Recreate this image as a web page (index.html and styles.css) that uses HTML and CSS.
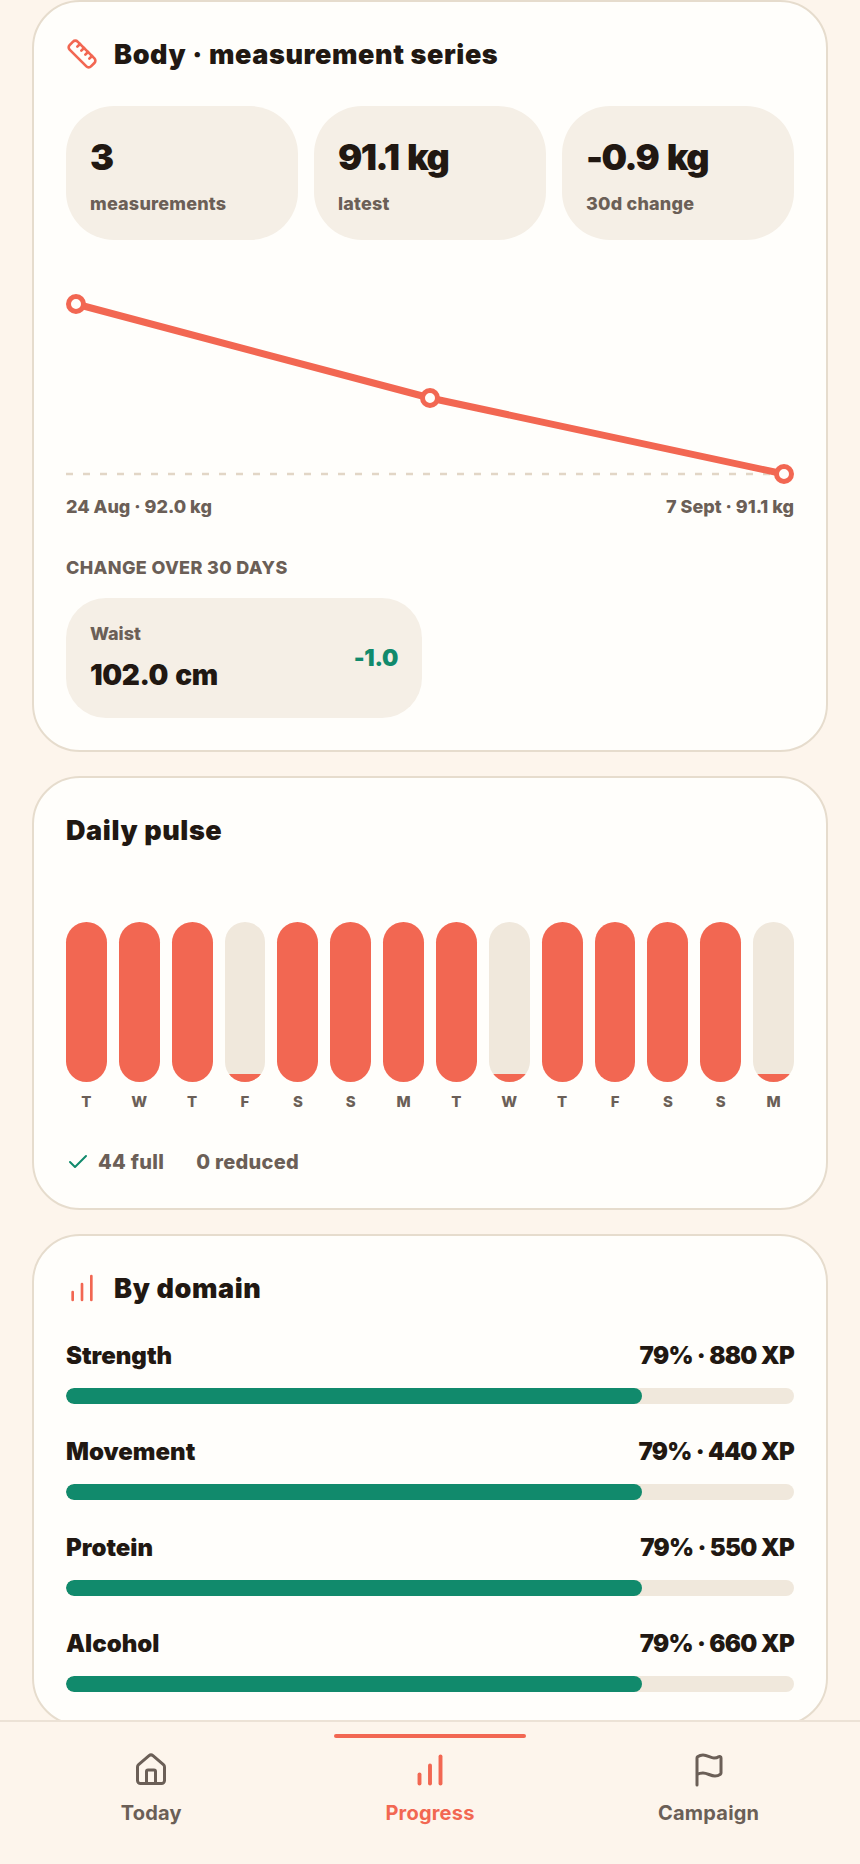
FILE: index.html
```html
<!DOCTYPE html>
<html lang="en">
<head>
<meta charset="utf-8">
<title>Progress</title>
<link rel="stylesheet" href="styles.css">
</head>
<body>
<main class="page">
  <section class="card">
    <header class="card-head">
      <svg class="head-icon" viewBox="0 0 24 24"><path d="M21.3 15.3a2.4 2.4 0 0 1 0 3.4l-2.6 2.6a2.4 2.4 0 0 1-3.4 0L2.7 8.7a2.41 2.41 0 0 1 0-3.4l2.6-2.6a2.41 2.41 0 0 1 3.4 0Z"/><path d="m14.5 12.5 2-2"/><path d="m11.5 9.5 2-2"/><path d="m8.5 6.5 2-2"/><path d="m17.5 15.5 2-2"/></svg>
      <h2 class="card-title">Body · measurement series</h2>
    </header>
    <div class="stats">
      <div class="stat"><div class="stat-value">3</div><div class="stat-label">measurements</div></div>
      <div class="stat"><div class="stat-value">91.1 kg</div><div class="stat-label">latest</div></div>
      <div class="stat"><div class="stat-value">-0.9 kg</div><div class="stat-label">30d change</div></div>
    </div>
    <svg class="chart" viewBox="0 0 728 208">
      <line class="chart-base" x1="0" y1="202" x2="728" y2="202"/>
      <polyline class="chart-line" points="10,32 364,126 718,202"/>
      <circle class="chart-dot" cx="10" cy="32" r="7.5"/>
      <circle class="chart-dot" cx="364" cy="126" r="7.5"/>
      <circle class="chart-dot" cx="718" cy="202" r="7.5"/>
    </svg>
    <div class="chart-labels"><span>24 Aug · 92.0 kg</span><span>7 Sept · 91.1 kg</span></div>
    <h3 class="section-label">CHANGE OVER 30 DAYS</h3>
    <div class="change-grid">
      <div class="change">
        <div class="change-text"><div class="change-name">Waist</div><div class="change-value">102.0 cm</div></div>
        <div class="change-delta">-1.0</div>
      </div>
    </div>
  </section>

  <section class="card">
    <header class="card-head"><h2 class="card-title">Daily pulse</h2></header>
    <div class="pulse">
      <div class="day"><div class="bar full"></div><span>T</span></div>
      <div class="day"><div class="bar full"></div><span>W</span></div>
      <div class="day"><div class="bar full"></div><span>T</span></div>
      <div class="day"><div class="bar low"><i></i></div><span>F</span></div>
      <div class="day"><div class="bar full"></div><span>S</span></div>
      <div class="day"><div class="bar full"></div><span>S</span></div>
      <div class="day"><div class="bar full"></div><span>M</span></div>
      <div class="day"><div class="bar full"></div><span>T</span></div>
      <div class="day"><div class="bar low"><i></i></div><span>W</span></div>
      <div class="day"><div class="bar full"></div><span>T</span></div>
      <div class="day"><div class="bar full"></div><span>F</span></div>
      <div class="day"><div class="bar full"></div><span>S</span></div>
      <div class="day"><div class="bar full"></div><span>S</span></div>
      <div class="day"><div class="bar low"><i></i></div><span>M</span></div>
    </div>
    <div class="legend">
      <span class="legend-item"><svg class="check" viewBox="0 0 24 24"><path d="M20 6 9 17l-5-5"/></svg>44 full</span>
      <span class="legend-item">0 reduced</span>
    </div>
  </section>

  <section class="card">
    <header class="card-head">
      <svg class="head-icon" viewBox="0 0 24 24"><path d="M5 21v-6"/><path d="M12 21V9"/><path d="M19 21V3"/></svg>
      <h2 class="card-title">By domain</h2>
    </header>
    <div class="domains">
      <div class="domain"><div class="domain-row"><span>Strength</span><span class="domain-value">79% · 880 XP</span></div><div class="track"><div class="fill" style="width:79.1%"></div></div></div>
      <div class="domain"><div class="domain-row"><span>Movement</span><span class="domain-value">79% · 440 XP</span></div><div class="track"><div class="fill" style="width:79.1%"></div></div></div>
      <div class="domain"><div class="domain-row"><span>Protein</span><span class="domain-value">79% · 550 XP</span></div><div class="track"><div class="fill" style="width:79.1%"></div></div></div>
      <div class="domain"><div class="domain-row"><span>Alcohol</span><span class="domain-value">79% · 660 XP</span></div><div class="track"><div class="fill" style="width:79.1%"></div></div></div>
    </div>
  </section>
</main>

<nav class="nav">
  <a class="nav-item">
    <svg class="nav-icon" viewBox="0 0 24 24"><path d="M15 21v-8a1 1 0 0 0-1-1h-4a1 1 0 0 0-1 1v8"/><path d="M3 10a2 2 0 0 1 .709-1.528l7-5.999a2 2 0 0 1 2.582 0l7 5.999A2 2 0 0 1 21 10v9a2 2 0 0 1-2 2H5a2 2 0 0 1-2-2z"/></svg>
    <span>Today</span>
  </a>
  <a class="nav-item active">
    <svg class="nav-icon" viewBox="0 0 24 24"><path d="M5 21v-6"/><path d="M12 21V9"/><path d="M19 21V3"/></svg>
    <span>Progress</span>
  </a>
  <a class="nav-item">
    <svg class="nav-icon" viewBox="0 0 24 24"><path d="M4 22V4a1 1 0 0 1 .4-.8A6 6 0 0 1 8 2c3 0 5 2 7.333 2q2 0 3.067-.8A1 1 0 0 1 20 4v10a1 1 0 0 1-.4.8A6 6 0 0 1 16 16c-3 0-5-2-8-2a8 8 0 0 0-4 1"/></svg>
    <span>Campaign</span>
  </a>
</nav>
</body>
</html>
```
FILE: styles.css
```css
* { box-sizing: border-box; }
html, body { margin: 0; height: 1864px; overflow: hidden; }
body {
  background: #fdf5ec;
  color: #211812;
  font-family: Inter, "Liberation Sans", sans-serif;
}
.page { display: flex; flex-direction: column; gap: 24px; padding: 0 32px; }
.card {
  background: #fffefb;
  border: 2px solid #e6dccd;
  border-radius: 48px;
  padding: 32px;
}
.card-head { display: flex; align-items: center; gap: 16px; height: 40px; }
.head-icon {
  width: 32px; height: 32px; flex: none;
  fill: none; stroke: #f26752; stroke-width: 2; stroke-linecap: round; stroke-linejoin: round;
}
.card-title { margin: 0; padding-top: 1px; font-size: 27px; line-height: 40px; font-weight: 900; letter-spacing: 0.6px; }
.stats { display: grid; grid-template-columns: repeat(3, 1fr); gap: 16px; margin-top: 32px; }
.stat { background: #f5efe6; border-radius: 48px; height: 134px; padding: 26px 24px 0; }
.stat-value { font-size: 36px; line-height: 50px; font-weight: 900; letter-spacing: -1.6px; word-spacing: 3px; }
.stat-label { font-size: 18px; line-height: 24px; font-weight: 800; letter-spacing: 0.2px; color: #6b5f57; margin-top: 10px; }
.chart { display: block; width: 728px; height: 208px; margin-top: 32px; overflow: visible; }
.chart-base { stroke: #e2d6c6; stroke-width: 2.5; stroke-dasharray: 7 10; }
.chart-line { fill: none; stroke: #f26752; stroke-width: 7; stroke-linejoin: round; }
.chart-dot { fill: #fffefb; stroke: #f26752; stroke-width: 5; }
.chart-labels {
  display: flex; justify-content: space-between;
  margin-top: 15px; font-size: 18px; line-height: 24px; font-weight: 800; color: #6b5f57;
}
.section-label { margin: 37px 0 0; font-size: 18px; line-height: 24px; font-weight: 800; letter-spacing: 0.35px; color: #6b5f57; }
.change-grid { display: grid; grid-template-columns: repeat(2, 1fr); gap: 16px; margin-top: 18px; }
.change {
  display: flex; align-items: center; justify-content: space-between;
  height: 120px; padding: 0 24px; background: #f5efe6; border-radius: 40px;
}
.change-text { padding-bottom: 2px; }
.change-name { font-size: 18px; line-height: 24px; font-weight: 800; color: #6b5f57; }
.change-value { font-size: 28px; line-height: 36px; font-weight: 900; margin-top: 11px; letter-spacing: -0.4px; word-spacing: 2px; }
.change-delta { font-size: 23px; line-height: 32px; font-weight: 900; letter-spacing: -0.3px; color: #118a6c; }
.pulse { display: flex; gap: 12px; margin-top: 72px; }
.day { flex: 1; display: flex; flex-direction: column; align-items: center; }
.day span { margin-top: 10px; font-size: 15px; line-height: 20px; font-weight: 800; color: #6b5f57; }
.bar { width: 100%; height: 160px; border-radius: 21px; overflow: hidden; display: flex; align-items: flex-end; }
.bar.full { background: #f26752; }
.bar.low { background: #f0e8dc; }
.bar.low i { display: block; width: 100%; height: 8px; background: #f26752; }
.legend { display: flex; gap: 32px; margin-top: 35px; height: 29px; align-items: center; font-size: 20px; font-weight: 800; letter-spacing: 0.3px; color: #6b5f57; }
.legend-item { display: flex; align-items: center; gap: 8px; }
.check { width: 24px; height: 24px; fill: none; stroke: #118a6c; stroke-width: 2; stroke-linecap: round; stroke-linejoin: round; }
.domains { display: flex; flex-direction: column; gap: 34px; margin-top: 34px; }
.domain-row { display: flex; justify-content: space-between; font-size: 24px; line-height: 28px; font-weight: 900; margin-bottom: 18px; }
.domain-value { letter-spacing: -0.7px; }
.track { height: 16px; background: #f0e8dc; border-radius: 8px; overflow: hidden; }
.fill { height: 100%; background: #118a6c; border-radius: 8px; }
.nav {
  position: fixed; left: 0; right: 0; bottom: 0; height: 144px;
  display: grid; grid-template-columns: repeat(3, 1fr); padding: 0 12px;
  background: #fdf5ec; border-top: 2px solid #ece2d6;
}
.nav-item {
  position: relative; display: flex; flex-direction: column; align-items: center;
  padding-top: 30px; color: #6b5f57; font-size: 20px; line-height: 28px; font-weight: 700; letter-spacing: 0.2px;
}
.nav-icon { width: 36px; height: 36px; fill: none; stroke: currentColor; stroke-width: 2; stroke-linecap: round; stroke-linejoin: round; }
.nav-item span { margin-top: 11px; }
.nav-item.active { color: #f26752; }
.nav-item.active .nav-icon { stroke-width: 2.6; }
.nav-item.active::before {
  content: ""; position: absolute; top: 12px; left: calc(50% - 96px); width: 192px; height: 4px;
  background: #f26752; border-radius: 2px;
}
```
